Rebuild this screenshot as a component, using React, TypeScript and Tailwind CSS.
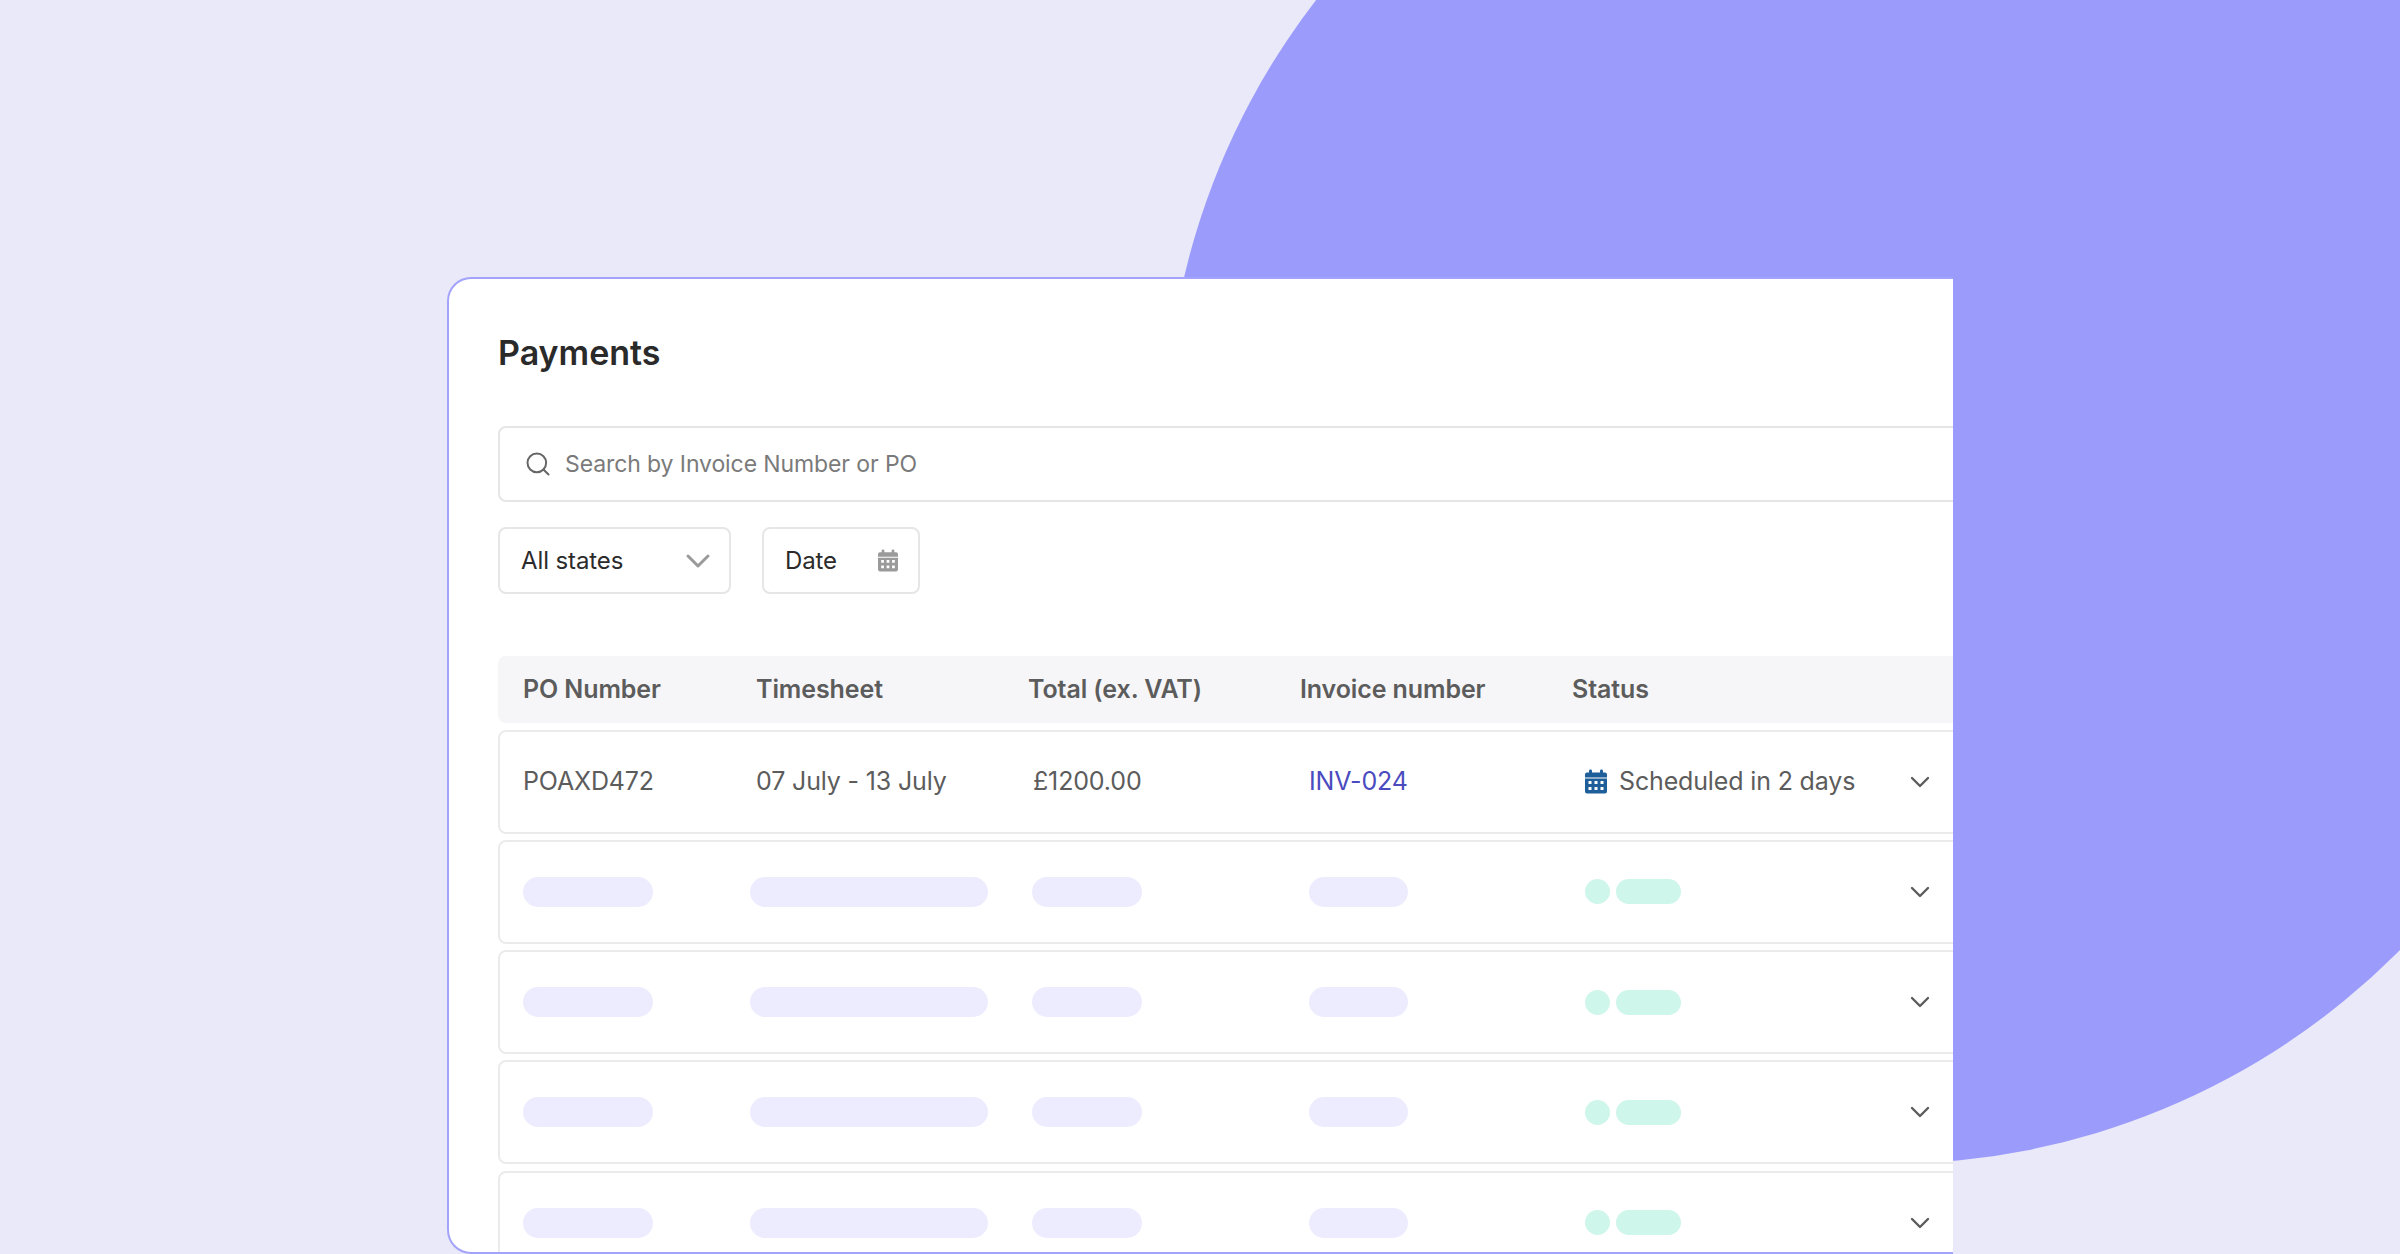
import { ChevronDown, Search } from 'lucide-react';

const FONT = 'font-["Inter",sans-serif]';

const CalendarIcon = ({ className }: { className: string }) => (
  <svg viewBox="0 0 22 24" className={className} fill="currentColor">
    <rect x="4" y="0" width="3" height="5" rx="1.4" />
    <rect x="15" y="0" width="3" height="5" rx="1.4" />
    <path d="M2 3h18a2 2 0 0 1 2 2v3H0V5a2 2 0 0 1 2-2z" />
    <path
      fillRule="evenodd"
      d="M0 9h22v13a2 2 0 0 1-2 2H2a2 2 0 0 1-2-2V9zm3.5 2.5v3h3v-3h-3zm6 0v3h3v-3h-3zm6 0v3h3v-3h-3zm-12 6v3h3v-3h-3zm6 0v3h3v-3h-3zm6 0v3h3v-3h-3z"
    />
  </svg>
);

const Bar = ({ className }: { className: string }) => (
  <div className={`h-[30px] rounded-full bg-[#ECECFE] ${className}`} />
);

const RowShell = ({ children }: { children: React.ReactNode }) => (
  <div className="grid h-[104px] w-[1500px] shrink-0 grid-cols-[227px_282px_277px_276px_319px_32px] items-center rounded-lg border-2 border-[#EBEBEB] pl-[23px] text-[25px] tracking-[-0.15px] text-[#5C5C5C]">
    {children}
    <ChevronDown className="size-8 text-[#5C5C5C]" strokeWidth={1.8} />
  </div>
);

const SkeletonRow = () => (
  <RowShell>
    <Bar className="w-[130px]" />
    <Bar className="w-[238px]" />
    <Bar className="w-[110px]" />
    <Bar className="w-[99px]" />
    <div className="flex items-center gap-[6px]">
      <div className="size-[25px] rounded-full bg-[#CFF6EA]" />
      <div className="h-[25px] w-[65px] rounded-full bg-[#CFF6EA]" />
    </div>
  </RowShell>
);

export default function App() {
  return (
    <div className={`relative h-[1254px] w-[2400px] overflow-hidden bg-[#E9E9F9] pl-[447px] pt-[277px] ${FONT}`}>
      <div className="absolute left-[1165px] top-[-280px] size-[1444px] rounded-full bg-[#9B9BFB]" />

      <main className="relative h-[977px] w-[1506px] overflow-hidden rounded-l-[24px] border-2 border-r-0 border-[#A3A3FB] bg-white pl-[49px]">
        <h1 className="mt-[49px] h-[50px] text-[34px] font-semibold leading-[50px] text-[#2A2A2A]">Payments</h1>

        <div className="mt-[48px] flex h-[76px] w-[1500px] items-center gap-[13px] rounded-lg border-2 border-[#E6E6E6] pl-[24px] text-[23px] tracking-[-0.1px] text-[#7A7A7A]">
          <Search className="size-[28px] text-[#666666]" strokeWidth={1.7} />
          <span>Search by Invoice Number or PO</span>
        </div>

        <div className="mt-[25px] flex gap-[31px] text-[24px] tracking-[-0.1px] text-[#2B2B2B]">
          <div className="flex h-[67px] w-[233px] items-center justify-between rounded-lg border-2 border-[#E6E6E6] pl-[21px] pr-[11px]">
            <span>All states</span>
            <ChevronDown className="size-10 text-[#9A9A9A]" strokeWidth={1.8} />
          </div>
          <div className="flex h-[67px] w-[158px] items-center justify-between rounded-lg border-2 border-[#E6E6E6] pl-[21px] pr-[20px]">
            <span>Date</span>
            <CalendarIcon className="h-[23px] w-[20px] text-[#9A9A9A]" />
          </div>
        </div>

        <div className="mt-[62px] grid h-[67px] w-[1500px] grid-cols-[233px_272px_272px_272px_1fr] items-center rounded-lg bg-[#F6F6F8] pl-[25px] text-[25px] font-semibold tracking-[-0.1px] text-[#5C5C5C]">
          <span>PO Number</span>
          <span>Timesheet</span>
          <span>Total (ex. VAT)</span>
          <span>Invoice number</span>
          <span>Status</span>
        </div>

        <div className="mt-[6.5px] flex flex-col gap-[6.3px]">
          <RowShell>
            <span>POAXD472</span>
            <span className="pl-[6px]">07 July - 13 July</span>
            <span className="pl-px">£1200.00</span>
            <span className="text-[#4B4BC0]">INV-024</span>
            <div className="flex items-center gap-[12px]">
              <CalendarIcon className="h-[25px] w-[22px] text-[#1F5F99]" />
              <span>Scheduled in 2 days</span>
            </div>
          </RowShell>
          <SkeletonRow />
          <SkeletonRow />
          <SkeletonRow />
          <SkeletonRow />
        </div>
      </main>
    </div>
  );
}
